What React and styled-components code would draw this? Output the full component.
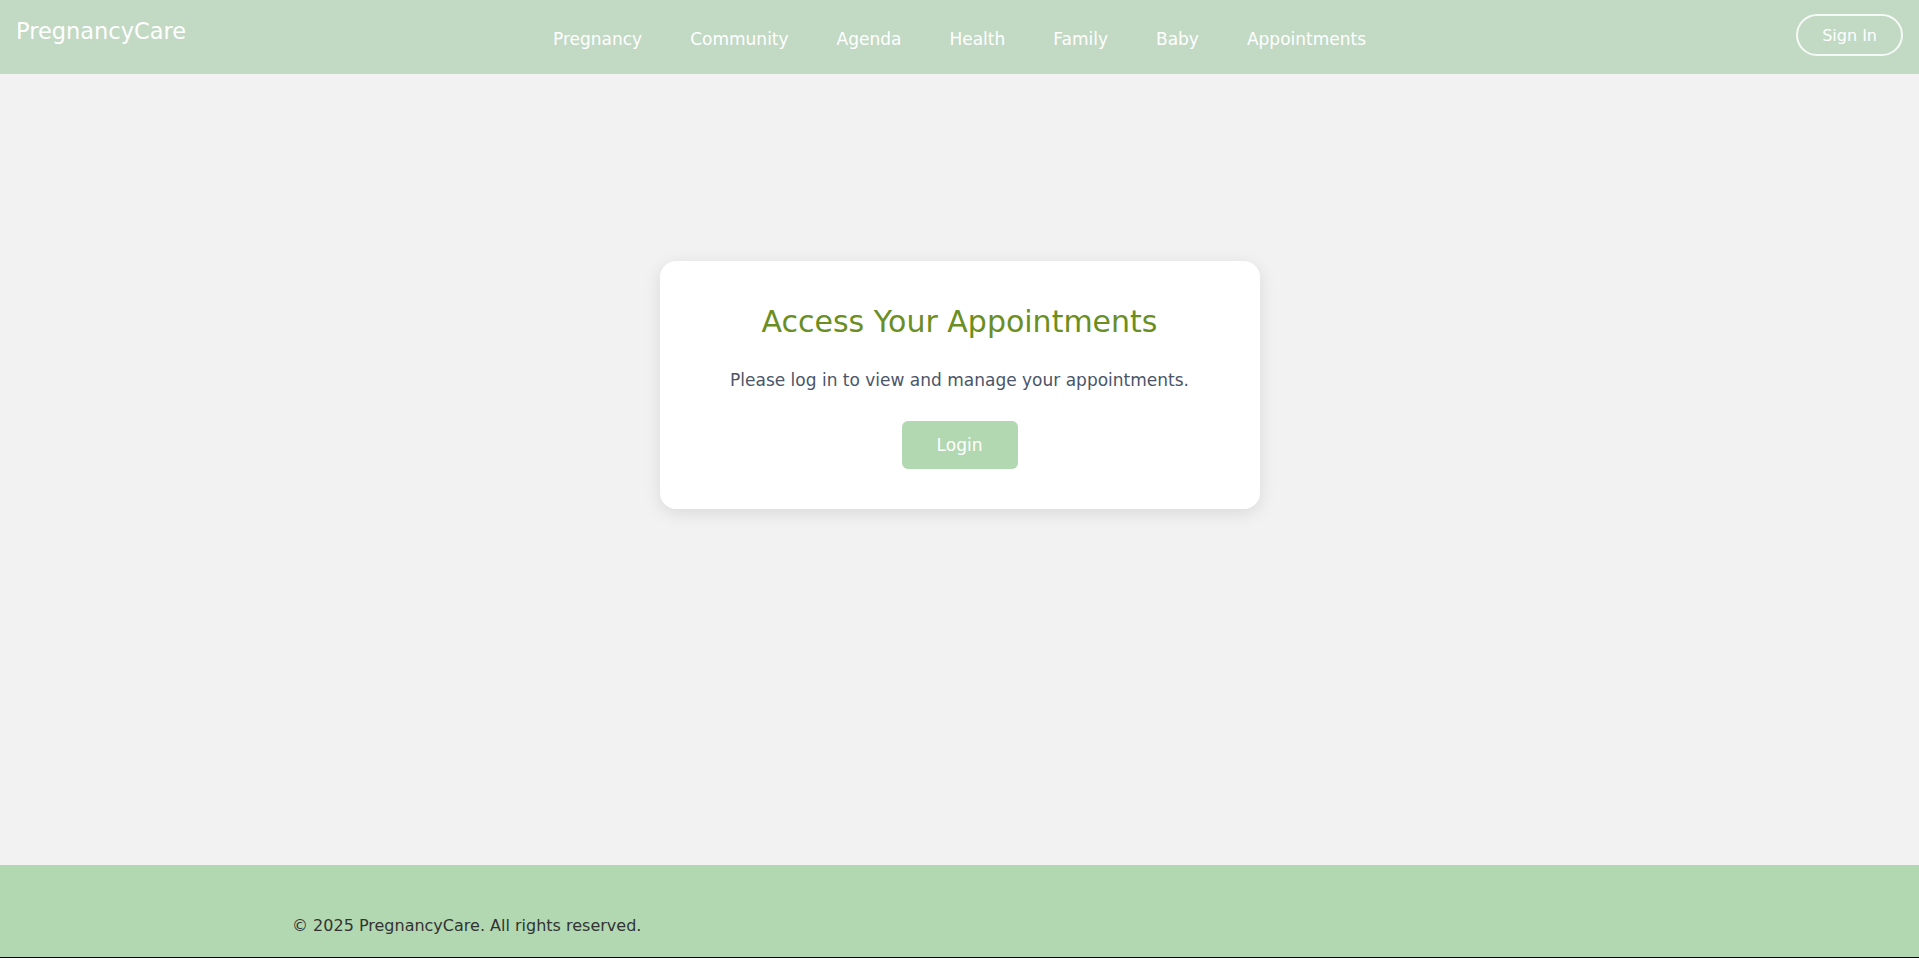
import styled, { createGlobalStyle } from "styled-components";

const GlobalStyle = createGlobalStyle`
  * {
    box-sizing: border-box;
  }

  body {
    margin: 0;
    font-family: "DejaVu Sans", "Noto Sans", sans-serif;
    background-color: #f2f2f2;
  }
`;

export const Page = styled.div`
  display: flex;
  flex-direction: column;
  min-height: 100vh;
`;

export const StyledHeader = styled.header`
  display: grid;
  grid-template-columns: 1fr auto 1fr;
  align-items: center;
  height: 74px;
  padding: 0 16px;
  background-color: #c2d9c4;
  color: white;
`;

export const Logo = styled.a`
  align-self: start;
  justify-self: start;
  margin-top: 18px;
  font-size: 22.5px;
  color: white;
  text-decoration: none;
`;

export const NavList = styled.nav`
  display: flex;
  gap: 48px;
  margin-top: 3px;
`;

export const NavLink = styled.a`
  font-size: 17px;
  color: white;
  text-decoration: none;
  cursor: pointer;
`;

export const SignInButton = styled.button`
  align-self: start;
  justify-self: end;
  margin-top: 14px;
  height: 42px;
  padding: 0 24px;
  border: 2px solid rgba(255, 255, 255, 0.85);
  border-radius: 999px;
  background: transparent;
  color: white;
  font-family: inherit;
  font-size: 16px;
  cursor: pointer;
`;

export const Main = styled.main`
  flex: 1;
  display: flex;
  justify-content: center;
  align-items: flex-start;
  padding-top: 187px;
  background-color: #f2f2f2;
`;

export const Card = styled.section`
  width: 600px;
  padding: 43px 40px 40px;
  background-color: white;
  border-radius: 16px;
  box-shadow: 0 4px 18px rgba(0, 0, 0, 0.1);
  text-align: center;
`;

export const Title = styled.h2`
  margin: 0 0 31px;
  font-size: 30px;
  font-weight: normal;
  color: #6b8e23;
`;

export const Message = styled.p`
  margin: 0 0 31px;
  font-size: 17px;
  color: #4a5568;
`;

export const LoginButton = styled.button`
  width: 116px;
  height: 48px;
  border: none;
  border-radius: 6px;
  background-color: #b2d8b2;
  color: white;
  font-family: inherit;
  font-size: 17px;
  cursor: pointer;
`;

export const StyledFooter = styled.footer`
  height: 93px;
  background-color: #b2d8b2;
  border-bottom: 1px solid #000;
`;

export const FooterInner = styled.div`
  max-width: 1335px;
  margin: 0 auto;
  padding-top: 51px;
  font-size: 16px;
  color: #333;
`;

const links = ["Pregnancy", "Community", "Agenda", "Health", "Family", "Baby", "Appointments"];

const App = () => {
  return (
    <Page>
      <GlobalStyle />
      <StyledHeader>
        <Logo>PregnancyCare</Logo>
        <NavList>
          {links.map((link) => (
            <NavLink key={link}>{link}</NavLink>
          ))}
        </NavList>
        <SignInButton>Sign In</SignInButton>
      </StyledHeader>
      <Main>
        <Card>
          <Title>Access Your Appointments</Title>
          <Message>Please log in to view and manage your appointments.</Message>
          <LoginButton>Login</LoginButton>
        </Card>
      </Main>
      <StyledFooter>
        <FooterInner>© 2025 PregnancyCare. All rights reserved.</FooterInner>
      </StyledFooter>
    </Page>
  );
};

export default App;
